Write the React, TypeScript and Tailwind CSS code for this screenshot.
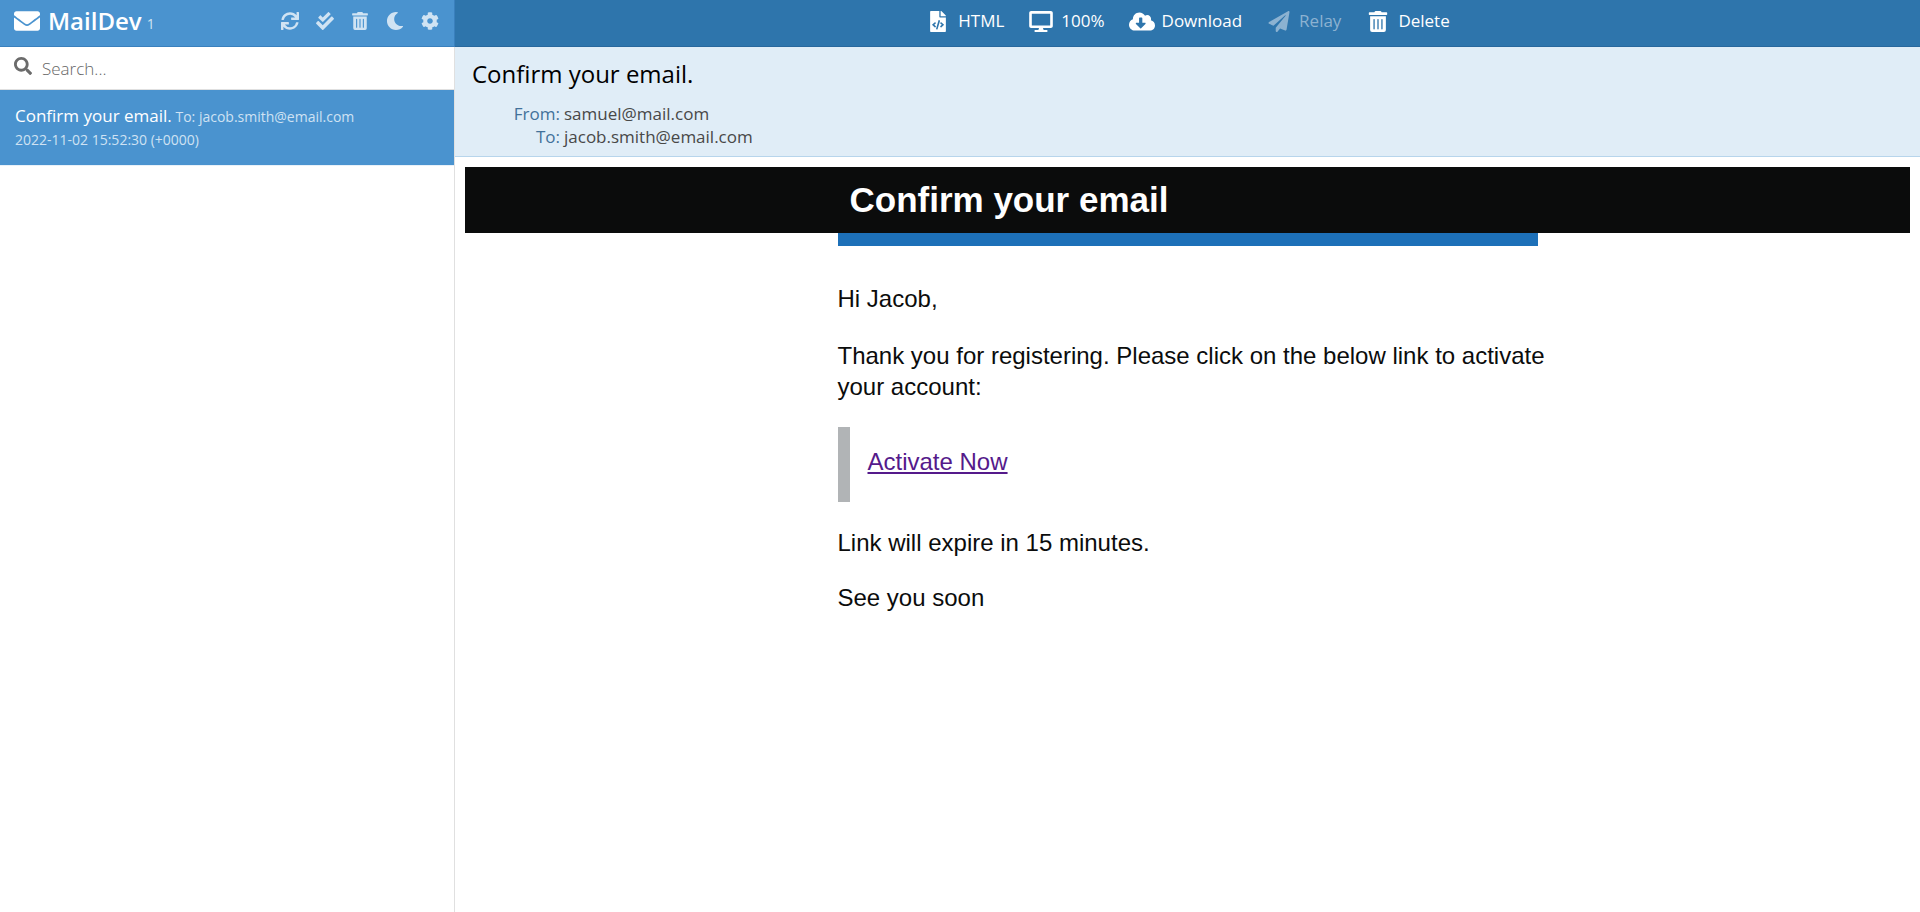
import React from "react";
import {
  FaCheckDouble,
  FaCloudDownloadAlt,
  FaCog,
  FaDesktop,
  FaEnvelope,
  FaFileCode,
  FaMoon,
  FaPaperPlane,
  FaSearch,
  FaSync,
  FaTrashAlt,
} from "react-icons/fa";
import type { IconType } from "react-icons";

const sidebarActions: { label: string; Icon: IconType }[] = [
  { label: "Refresh", Icon: FaSync },
  { label: "Mark all as read", Icon: FaCheckDouble },
  { label: "Delete all", Icon: FaTrashAlt },
  { label: "Toggle dark theme", Icon: FaMoon },
  { label: "Settings", Icon: FaCog },
];

const toolbarActions: { label: string; Icon: IconType; disabled?: boolean }[] = [
  { label: "HTML", Icon: FaFileCode },
  { label: "100%", Icon: FaDesktop },
  { label: "Download", Icon: FaCloudDownloadAlt },
  { label: "Relay", Icon: FaPaperPlane, disabled: true },
  { label: "Delete", Icon: FaTrashAlt },
];

function Sidebar() {
  return (
    <aside className="flex w-[455px] shrink-0 flex-col border-r border-[#e0e0e0]">
      <header className="-mr-px flex h-[47px] items-center border-r border-b border-[#3a80bd] bg-[#4a93cf] pb-1 pl-[14px] pr-[14px] text-white">
        <FaEnvelope className="size-[26px]" />
        <h1 className="ml-2 text-2xl font-semibold">MailDev</h1>
        <span className="ml-[5px] mt-[6px] text-sm text-[#d0e3f3]">1</span>
        <div className="ml-auto flex gap-[15px] text-[#d0e3f3]">
          {sidebarActions.map(({ label, Icon }) => (
            <button key={label} type="button" aria-label={label} className="flex w-5 justify-center">
              <Icon className="size-[18px]" />
            </button>
          ))}
        </div>
      </header>
      <label className="flex h-[43px] items-center border-b border-[#e0e0e0] pl-[14px]">
        <FaSearch className="mb-1 size-[18px] text-[#6b6b6b]" />
        <input
          type="text"
          aria-label="Search"
          placeholder="Search..."
          className="ml-[10px] flex-1 pt-[2px] text-[17px] font-light outline-none placeholder:text-[#666666]"
        />
      </label>
      <ul>
        <li className="border-b border-[#e8f1f9]">
          <a href="#email" className="block h-[75px] bg-[#4a93cf] px-[15px] pt-[14px] text-sm leading-[23px] text-[#cfe2f3]">
            <span className="text-[17px] text-white">Confirm your email.</span> To: jacob.smith@email.com
            <span className="block">2022-11-02 15:52:30 (+0000)</span>
          </a>
        </li>
      </ul>
    </aside>
  );
}

function Toolbar() {
  return (
    <nav className="flex h-[47px] items-center justify-center gap-6 border-b border-[#28689d] bg-[#2e75ac] pb-1 text-[17px] text-white">
      {toolbarActions.map(({ label, Icon, disabled }) => (
        <button
          key={label}
          type="button"
          disabled={disabled}
          className="flex items-center gap-[7px] disabled:text-[#8cb2d1]"
        >
          <Icon className="h-[21px] w-[26px]" />
          {label}
        </button>
      ))}
    </nav>
  );
}

function MessageHeader() {
  return (
    <header className="h-[110px] border-b border-[#b7d5ec] bg-[#e0edf7] px-[17px] pt-[9px]">
      <h2 className="text-2xl leading-9 text-black">Confirm your email.</h2>
      <dl className="mt-[10px] grid grid-cols-[88px_1fr] gap-x-1 text-[17px] leading-[23px] text-[#484848]">
        <dt className="text-right text-[#42719a]">From:</dt>
        <dd>samuel@mail.com</dd>
        <dt className="text-right text-[#42719a]">To:</dt>
        <dd>jacob.smith@email.com</dd>
      </dl>
    </header>
  );
}

function MessageBody() {
  return (
    <article className="p-[10px] font-['Liberation_Sans',Arial,sans-serif] text-2xl leading-[31px] text-[#0b0c0c]">
      <div className="bg-[#0b0c0c]">
        <h3 className="mx-auto flex h-[66px] max-w-[700px] items-center px-3 pb-px text-[35px] font-bold text-white">
          Confirm your email
        </h3>
      </div>
      <div className="mx-auto max-w-[700px]">
        <div className="h-[13px] bg-[#1d70b8]" />
        <p className="mt-[37px]">Hi Jacob,</p>
        <p className="-mr-4 mt-[26px]">
          Thank you for registering. Please click on the below link to activate your account:
        </p>
        <blockquote className="mt-[25px] h-[75px] border-l-[12px] border-[#b1b4b6] pl-[18px] pt-[19px]">
          <a href="#activate" className="text-[#551a8b] underline">
            Activate Now
          </a>
        </blockquote>
        <p className="mt-[25px]">Link will expire in 15 minutes.</p>
        <p className="mt-6">See you soon</p>
      </div>
    </article>
  );
}

export default function App() {
  return (
    <div className="flex min-h-screen bg-white font-['Segoe_UI','Open_Sans','Noto_Sans',sans-serif]">
      <Sidebar />
      <main className="min-w-0 flex-1">
        <Toolbar />
        <MessageHeader />
        <MessageBody />
      </main>
    </div>
  );
}
